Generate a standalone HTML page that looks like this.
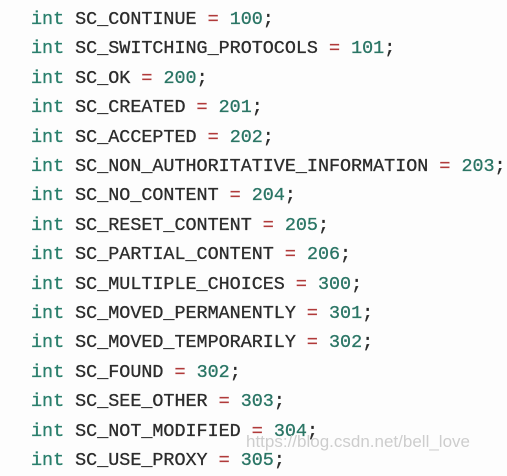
<!DOCTYPE html>
<html><head><style>
body{margin:0;width:507px;height:469px;background:#fdfdfd;overflow:hidden;position:relative}
.c{position:absolute;left:31px;top:5px;font-family:"Liberation Mono",monospace;font-size:18.4px;line-height:29.4px;color:#2c2c2c;white-space:pre;-webkit-text-stroke:0.3px currentColor}
.k{color:#2a7f6c}.e{color:#b03a3a}.n{color:#2a7565}
.w{position:absolute;left:246px;top:432px;font-family:"Liberation Sans",sans-serif;font-size:17px;color:#c8c8c8;opacity:.9}
</style></head><body>
<div class="c"><span class="k">int</span> SC_CONTINUE <span class="e">=</span> <span class="n">100</span>;
<span class="k">int</span> SC_SWITCHING_PROTOCOLS <span class="e">=</span> <span class="n">101</span>;
<span class="k">int</span> SC_OK <span class="e">=</span> <span class="n">200</span>;
<span class="k">int</span> SC_CREATED <span class="e">=</span> <span class="n">201</span>;
<span class="k">int</span> SC_ACCEPTED <span class="e">=</span> <span class="n">202</span>;
<span class="k">int</span> SC_NON_AUTHORITATIVE_INFORMATION <span class="e">=</span> <span class="n">203</span>;
<span class="k">int</span> SC_NO_CONTENT <span class="e">=</span> <span class="n">204</span>;
<span class="k">int</span> SC_RESET_CONTENT <span class="e">=</span> <span class="n">205</span>;
<span class="k">int</span> SC_PARTIAL_CONTENT <span class="e">=</span> <span class="n">206</span>;
<span class="k">int</span> SC_MULTIPLE_CHOICES <span class="e">=</span> <span class="n">300</span>;
<span class="k">int</span> SC_MOVED_PERMANENTLY <span class="e">=</span> <span class="n">301</span>;
<span class="k">int</span> SC_MOVED_TEMPORARILY <span class="e">=</span> <span class="n">302</span>;
<span class="k">int</span> SC_FOUND <span class="e">=</span> <span class="n">302</span>;
<span class="k">int</span> SC_SEE_OTHER <span class="e">=</span> <span class="n">303</span>;
<span class="k">int</span> SC_NOT_MODIFIED <span class="e">=</span> <span class="n">304</span>;
<span class="k">int</span> SC_USE_PROXY <span class="e">=</span> <span class="n">305</span>;</div>
<div class="w">https://blog.csdn.net/bell_love</div>
</body></html>
